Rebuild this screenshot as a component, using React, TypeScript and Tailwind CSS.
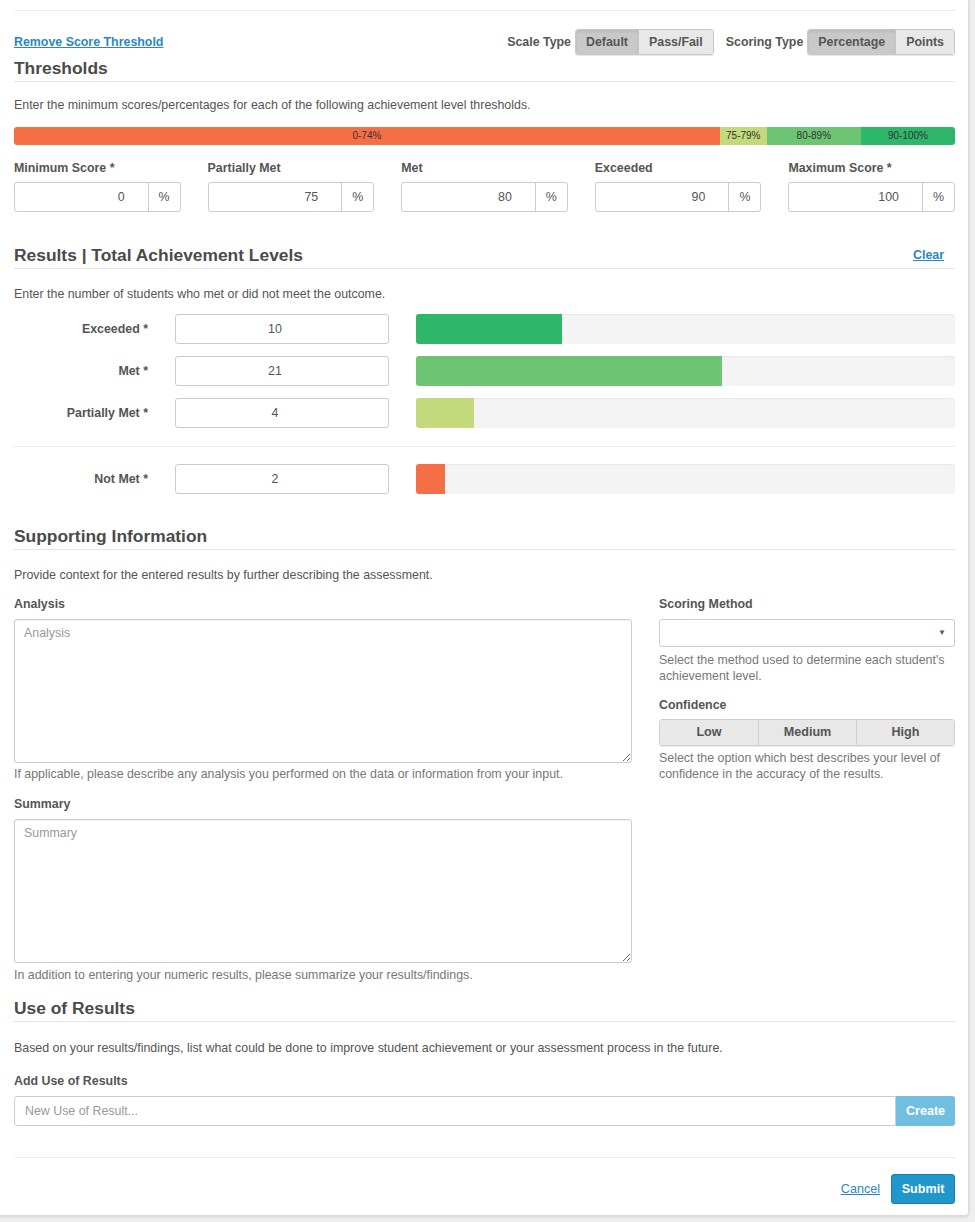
import { useState } from "react";

const font = { fontFamily: '"Liberation Sans", Arial, sans-serif' };

const thresholds = [
  { label: "Minimum Score *", value: "0" },
  { label: "Partially Met", value: "75" },
  { label: "Met", value: "80" },
  { label: "Exceeded", value: "90" },
  { label: "Maximum Score *", value: "100" },
];

const results = [
  { label: "Exceeded *", value: 10, color: "bg-[#2eb76b]" },
  { label: "Met *", value: 21, color: "bg-[#6dc574]" },
  { label: "Partially Met *", value: 4, color: "bg-[#c3da7c]" },
];

const notMet = { label: "Not Met *", value: 2, color: "bg-[#f56e45]" };
const total = 37;

function Heading({ children, right }: { children: React.ReactNode; right?: React.ReactNode }) {
  return (
    <div className="flex items-end justify-between border-b border-[#e5e5e5] pb-[3px]">
      <h2 className="text-[17.4px] leading-[20px] font-bold text-[#4a4a4a]">{children}</h2>
      {right}
    </div>
  );
}

function ResultRow({ row }: { row: { label: string; value: number; color: string } }) {
  const pct = (row.value / total) * 100;
  return (
    <div className="grid grid-cols-[134px_214px_1fr] gap-x-[27px] items-center">
      <label className="text-right text-[12.4px] font-bold text-[#555]">{row.label}</label>
      <input
        defaultValue={row.value}
        className="h-[30px] w-full rounded-[3px] border border-[#ccc] pr-[14px] text-center text-[12.4px] text-[#555] outline-none"
      />
      <div className="h-[30px] rounded-[3px] bg-[#f4f4f4] overflow-hidden shadow-[inset_0_1px_2px_rgba(0,0,0,0.06)]">
        <div className={`h-full ${row.color}`} style={{ width: `${pct}%` }} />
      </div>
    </div>
  );
}

function Toggle({ options, active }: { options: string[]; active: number }) {
  const [sel, setSel] = useState(active);
  return (
    <div className="flex h-[26px] rounded-[3px] overflow-hidden border border-[#c8c8c8] shadow-[0_1px_1px_rgba(0,0,0,0.1)]">
      {options.map((o, i) => (
        <button
          key={o}
          onClick={() => setSel(i)}
          className={`px-[10px] text-[12.4px] font-bold text-[#555] ${i > 0 ? "border-l border-[#c8c8c8]" : ""} ${
            sel === i ? "bg-[#c9c9c9] shadow-[inset_0_2px_3px_rgba(0,0,0,0.08)]" : "bg-[#e8e8e8]"
          }`}
        >
          {o}
        </button>
      ))}
    </div>
  );
}

const help = "text-[12.4px] leading-[16px] text-[#777]";
const label = "block text-[12.4px] leading-[16px] font-bold text-[#555]";
const body = "text-[12.4px] leading-[16px] text-[#555]";

export default function App() {
  const [confidence, setConfidence] = useState<number | null>(null);

  return (
    <div className="min-h-screen bg-[#efefef]" style={font}>
      <div className="w-[969px] bg-white rounded-br-[4px] border-r border-b border-[#dcdcdc] shadow-[0_1px_3px_rgba(0,0,0,0.12)] pl-[14px] pr-[13px] pt-[10px] pb-[11px]">
        <div className="border-t border-[#ececec]" />

        {/* header row */}
        <div className="mt-[18px] flex h-[26px] items-center justify-between">
          <a href="#" className="text-[12.4px] font-bold text-[#2b86c5] underline">
            Remove Score Threshold
          </a>
          <div className="flex items-center">
            <span className="mr-[4px] text-[12.4px] font-bold text-[#555]">Scale Type</span>
            <Toggle options={["Default", "Pass/Fail"]} active={0} />
            <span className="ml-[12px] mr-[4px] text-[12.4px] font-bold text-[#555]">Scoring Type</span>
            <Toggle options={["Percentage", "Points"]} active={0} />
          </div>
        </div>

        {/* thresholds */}
        <div className="mt-[3px]">
          <Heading>Thresholds</Heading>
        </div>
        <p className={`mt-[15px] ${body}`}>
          Enter the minimum scores/percentages for each of the following achievement level thresholds.
        </p>
        <div className="mt-[14px] flex h-[18px] rounded-[3px] overflow-hidden text-[10px] leading-[18px] text-[#333] text-center">
          <div className="w-[75%] bg-[#f56e45]">0-74%</div>
          <div className="w-[5%] bg-[#c3da7c]">75-79%</div>
          <div className="w-[10%] bg-[#6dc574]">80-89%</div>
          <div className="w-[10%] bg-[#2eb76b]">90-100%</div>
        </div>
        <div className="mt-[15px] grid grid-cols-5 gap-x-[27px]">
          {thresholds.map((t) => (
            <div key={t.label}>
              <label className={label}>{t.label}</label>
              <div className="mt-[6px] flex h-[30px] rounded-[3px] border border-[#ccc] overflow-hidden">
                <input
                  defaultValue={t.value}
                  className="min-w-0 flex-1 pl-[12px] pr-[23px] text-right text-[12.4px] text-[#555] outline-none"
                />
                <span className="flex w-[32px] items-center justify-center border-l border-[#ccc] text-[12.4px] text-[#555]">
                  %
                </span>
              </div>
            </div>
          ))}
        </div>

        {/* results */}
        <div className="mt-[33px]">
          <Heading
            right={
              <a href="#" className="mr-[11px] text-[12.4px] font-bold text-[#2b86c5] underline">
                Clear
              </a>
            }
          >
            Results | Total Achievement Levels
          </Heading>
        </div>
        <p className={`mt-[17px] ${body}`}>Enter the number of students who met or did not meet the outcome.</p>
        <div className="mt-[12px] flex flex-col gap-y-[12px]">
          {results.map((r) => (
            <ResultRow key={r.label} row={r} />
          ))}
        </div>
        <div className="mt-[18px] border-t border-[#ececec]" />
        <div className="mt-[17px]">
          <ResultRow row={notMet} />
        </div>

        {/* supporting information */}
        <div className="mt-[32px]">
          <Heading>Supporting Information</Heading>
        </div>
        <p className={`mt-[17px] ${body}`}>
          Provide context for the entered results by further describing the assessment.
        </p>
        <div className="mt-[13px] grid grid-cols-[618px_1fr] gap-x-[27px]">
          <div>
            <label className={label}>Analysis</label>
            <textarea
              placeholder="Analysis"
              className="mt-[7px] block h-[144px] w-full rounded-[3px] border border-[#ccc] px-[9px] py-[4px] text-[12.4px] text-[#555] placeholder:text-[#999] outline-none shadow-[inset_0_1px_1px_rgba(0,0,0,0.05)]"
            />
            <p className={`mt-[3px] ${help}`}>
              If applicable, please describe any analysis you performed on the data or information from your input.
            </p>
            <label className={`mt-[14px] ${label}`}>Summary</label>
            <textarea
              placeholder="Summary"
              className="mt-[7px] block h-[144px] w-full rounded-[3px] border border-[#ccc] px-[9px] py-[4px] text-[12.4px] text-[#555] placeholder:text-[#999] outline-none shadow-[inset_0_1px_1px_rgba(0,0,0,0.05)]"
            />
            <p className={`mt-[4px] ${help}`}>
              In addition to entering your numeric results, please summarize your results/findings.
            </p>
          </div>
          <div>
            <label className={label}>Scoring Method</label>
            <div className="mt-[7px] flex h-[28px] items-center justify-end rounded-[3px] border border-[#ccc] pr-[8px] text-[8px] text-[#555]">
              ▼
            </div>
            <p className={`mt-[5px] ${help}`}>
              Select the method used to determine each student's achievement level.
            </p>
            <label className={`mt-[13px] ${label}`}>Confidence</label>
            <div className="mt-[6px] grid h-[27px] grid-cols-3 rounded-[3px] overflow-hidden border border-[#d0d0d0] shadow-[0_1px_1px_rgba(0,0,0,0.1)]">
              {["Low", "Medium", "High"].map((c, i) => (
                <button
                  key={c}
                  onClick={() => setConfidence(i)}
                  className={`text-[12.6px] font-bold text-[#555] ${i > 0 ? "border-l border-[#d0d0d0]" : ""} ${
                    confidence === i ? "bg-[#c9c9c9]" : "bg-[#e8e8e8]"
                  }`}
                >
                  {c}
                </button>
              ))}
            </div>
            <p className={`mt-[4px] ${help}`}>
              Select the option which best describes your level of confidence in the accuracy of the results.
            </p>
          </div>
        </div>

        {/* use of results */}
        <div className="mt-[15px]">
          <Heading>Use of Results</Heading>
        </div>
        <p className={`mt-[18px] ${body}`}>
          Based on your results/findings, list what could be done to improve student achievement or your assessment
          process in the future.
        </p>
        <label className={`mt-[17px] ${label}`}>Add Use of Results</label>
        <div className="mt-[7px] flex h-[30px]">
          <input
            placeholder="New Use of Result..."
            className="min-w-0 flex-1 rounded-l-[3px] border border-[#ccc] px-[10px] text-[12.4px] text-[#555] placeholder:text-[#999] outline-none"
          />
          <button className="w-[59px] rounded-r-[3px] bg-[#70bee0] text-[12.6px] font-bold text-white">Create</button>
        </div>

        <div className="mt-[31px] border-t border-[#ececec]" />
        <div className="mt-[16px] flex items-center justify-end gap-x-[11px]">
          <a href="#" className="text-[12.6px] text-[#2b86c5] underline">
            Cancel
          </a>
          <button className="h-[30px] w-[64px] rounded-[3px] border border-[#1a7fae] bg-[#1f97cb] text-[12.6px] font-bold text-white">
            Submit
          </button>
        </div>
      </div>
    </div>
  );
}
